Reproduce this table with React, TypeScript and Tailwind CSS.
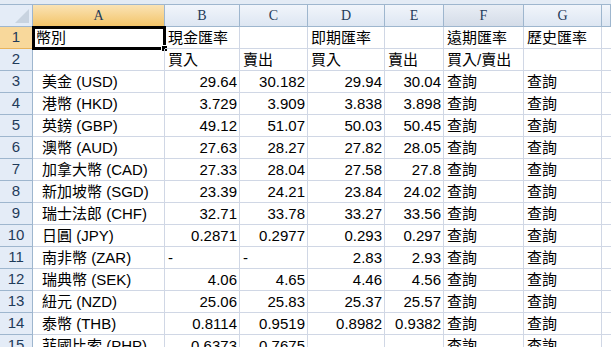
import React from 'react';

const cols = ['A', 'B', 'C', 'D', 'E', 'F', 'G'];

type Cell = { v: string; num?: boolean };

const n = (v: string): Cell => ({ v, num: true });
const t = (v: string): Cell => ({ v });

const rates: [string, Cell, Cell, Cell, Cell][] = [
  ['美金 (USD)', n('29.64'), n('30.182'), n('29.94'), n('30.04')],
  ['港幣 (HKD)', n('3.729'), n('3.909'), n('3.838'), n('3.898')],
  ['英鎊 (GBP)', n('49.12'), n('51.07'), n('50.03'), n('50.45')],
  ['澳幣 (AUD)', n('27.63'), n('28.27'), n('27.82'), n('28.05')],
  ['加拿大幣 (CAD)', n('27.33'), n('28.04'), n('27.58'), n('27.8')],
  ['新加坡幣 (SGD)', n('23.39'), n('24.21'), n('23.84'), n('24.02')],
  ['瑞士法郎 (CHF)', n('32.71'), n('33.78'), n('33.27'), n('33.56')],
  ['日圓 (JPY)', n('0.2871'), n('0.2977'), n('0.293'), n('0.297')],
  ['南非幣 (ZAR)', t('-'), t('-'), n('2.83'), n('2.93')],
  ['瑞典幣 (SEK)', n('4.06'), n('4.65'), n('4.46'), n('4.56')],
  ['紐元 (NZD)', n('25.06'), n('25.83'), n('25.37'), n('25.57')],
  ['泰幣 (THB)', n('0.8114'), n('0.9519'), n('0.8982'), n('0.9382')],
  ['菲國比索 (PHP)', n('0.6373'), n('0.7675'), t(''), t('')],
];

const rows: Cell[][] = [
  [t('幣別'), t('現金匯率'), t(''), t('即期匯率'), t(''), t('遠期匯率'), t('歷史匯率')],
  [t(''), t('買入'), t('賣出'), t('買入'), t('賣出'), t('買入/賣出'), t('')],
  ...rates.map(([name, ...vals]) => [{ v: name, indent: true } as Cell, ...vals, t('查詢'), t('查詢')]),
];

const gridCols = 'grid grid-cols-[33px_132px_75px_68px_77px_59px_80px_78px_1fr]';

function ColHeader({ label, active, hover }: { label: string; active?: boolean; hover?: boolean }) {
  const bg = active
    ? 'bg-gradient-to-b from-[#fae3b4] to-[#f3c467] border-b-[#f29536]'
    : hover
      ? 'bg-gradient-to-b from-[#e9eef5] to-[#d4dce8] border-b-[#9eb6ce]'
      : 'bg-gradient-to-b from-[#f1f5fb] to-[#dde6f2] border-b-[#9eb6ce]';
  return (
    <div
      className={`h-[22px] flex items-center justify-center border-r border-b border-r-[#9eb6ce] text-[14px] text-[#1f3b5a] font-['Liberation_Serif',serif] ${bg}`}
    >
      {label}
    </div>
  );
}

export default function App() {
  return (
    <div className="w-[611px] h-[347px] overflow-hidden bg-white font-['Liberation_Sans','Noto_Sans_CJK_TC',sans-serif] text-[15px] text-black">
      <div className="h-[5px] bg-[#e3ebf5] border-b border-[#9eb6ce]" />

      <div className={gridCols}>
        <div className="h-[22px] relative bg-[#e4ecf7] border-r border-b border-[#9eb6ce]">
          <div className="absolute right-[3px] bottom-[3px] w-0 h-0 border-l-[14px] border-l-transparent border-b-[14px] border-b-[#c8d3e0]" />
        </div>
        {cols.map(c => (
          <ColHeader key={c} label={c} active={c === 'A'} hover={c === 'F'} />
        ))}
        <ColHeader label="" />
      </div>

      {rows.map((row, ri) => (
        <div key={ri} className={gridCols}>
          <div
            className={`h-[22px] flex items-center justify-center border-r border-b text-[15px] text-[#1f3b5a] ${
              ri === 0
                ? 'bg-[#f8d89b] border-r-[#f29536] border-b-[#e9b45c]'
                : 'bg-[#e4ecf7] border-[#9eb6ce]'
            }`}
          >
            {ri + 1}
          </div>
          {row.map((cell, ci) => {
            const indent = (cell as Cell & { indent?: boolean }).indent;
            return (
              <div
                key={ci}
                className={`relative h-[22px] flex items-end pb-[1px] leading-[19px] whitespace-nowrap border-r border-b border-[#d0d7e5] ${
                  cell.num ? 'justify-end pr-[2px]' : indent ? 'pl-[9px]' : 'pl-[3px]'
                }`}
              >
                {cell.v}
                {ri === 0 && ci === 0 && (
                  <>
                    <div className="absolute -left-[1px] -top-[1px] -right-[2px] -bottom-[2px] border-[3px] border-black" />
                    <div className="absolute -right-[4px] -bottom-[4px] w-[7px] h-[7px] bg-black border border-white" />
                  </>
                )}
              </div>
            );
          })}
          <div className="h-[22px] border-b border-[#d0d7e5]" />
        </div>
      ))}
    </div>
  );
}
